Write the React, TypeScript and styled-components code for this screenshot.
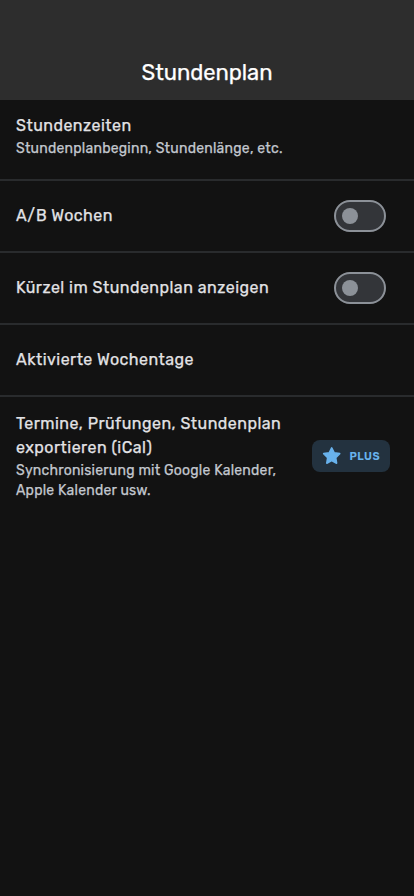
import React from "react";
import styled, { createGlobalStyle } from "styled-components";

const GlobalStyle = createGlobalStyle`
  * { box-sizing: border-box; }
  body {
    margin: 0;
    background: #121212;
    font-family: Rubik, Roboto, sans-serif;
    -webkit-text-stroke: 0.25px currentColor;
  }
`;

const Screen = styled.main`
  display: flex;
  flex-direction: column;
  min-height: 100vh;
  background: #121212;
`;

const Header = styled.header`
  display: flex;
  align-items: flex-end;
  justify-content: center;
  height: 100px;
  padding-bottom: 13px;
  background: #2d2d2d;
`;

const Heading = styled.h1`
  margin: 0;
  color: #fff;
  font-size: 22px;
  font-weight: 400;
  line-height: 28px;
  letter-spacing: -0.05px;
`;

const Row = styled.section<{ $height: number; $last?: boolean }>`
  display: flex;
  align-items: center;
  justify-content: space-between;
  height: ${(p) => p.$height}px;
  padding: 0 28px 0 16px;
  border-bottom: ${(p) => (p.$last ? "0" : "2px solid #292b2d")};
`;

const TopRow = styled(Row)`
  align-items: flex-start;
  padding-top: 14px;
`;

const ExportRow = styled(Row)`
  padding-right: 24px;
`;

const Labels = styled.div`
  display: flex;
  flex-direction: column;
`;

const Label = styled.span`
  color: #e2e2e5;
  font-size: 16px;
  font-weight: 400;
  line-height: 24px;
  letter-spacing: 0.47px;
  white-space: pre-line;
`;

const Description = styled.span`
  margin: 1px 0 -1px;
  color: #c2c7ce;
  font-size: 14px;
  font-weight: 400;
  line-height: 20px;
  letter-spacing: 0.22px;
  white-space: pre-line;
`;

const Switch = styled.button`
  display: flex;
  align-items: center;
  flex: none;
  width: 52px;
  height: 32px;
  padding: 0 6px;
  border: 2px solid #8c9198;
  border-radius: 16px;
  background: #333539;
`;

const Thumb = styled.span`
  width: 16px;
  height: 16px;
  border-radius: 50%;
  background: #8c9198;
`;

const Badge = styled.div`
  display: flex;
  align-items: center;
  flex: none;
  gap: 8px;
  width: 78.5px;
  height: 32px;
  padding-left: 10px;
  border-radius: 8px;
  background: #23323f;
  color: #68b2ec;
`;

const BadgeText = styled.span`
  padding-top: 1px;
  font-size: 11px;
  font-weight: 600;
  line-height: 16px;
  letter-spacing: 0.45px;
  -webkit-text-stroke: 0;
`;

const Star = () => (
  <svg width="20" height="20" viewBox="0 0 20 20" fill="currentColor" stroke="currentColor" strokeWidth="1.6" strokeLinejoin="round">
    <path d="M9.7 1.9L12.2 6.9L17.7 7.6L13.7 11.6L14.6 17.2L9.7 14.5L4.8 17.2L5.7 11.6L1.7 7.6L7.2 6.9Z" />
  </svg>
);

const Toggle = ({ label }: { label: string }) => (
  <Switch role="switch" aria-checked={false} aria-label={label}>
    <Thumb />
  </Switch>
);

export default function App() {
  return (
    <>
      <GlobalStyle />
      <Screen>
        <Header>
          <Heading>Stundenplan</Heading>
        </Header>
        <TopRow $height={81}>
          <Labels>
            <Label>Stundenzeiten</Label>
            <Description>Stundenplanbeginn, Stundenlänge, etc.</Description>
          </Labels>
        </TopRow>
        <Row $height={72}>
          <Label>A/B Wochen</Label>
          <Toggle label="A/B Wochen" />
        </Row>
        <Row $height={72}>
          <Label>Kürzel im Stundenplan anzeigen</Label>
          <Toggle label="Kürzel im Stundenplan anzeigen" />
        </Row>
        <Row $height={72}>
          <Label>Aktivierte Wochentage</Label>
        </Row>
        <ExportRow $height={118} $last>
          <Labels>
            <Label>{"Termine, Prüfungen, Stundenplan\nexportieren (iCal)"}</Label>
            <Description>{"Synchronisierung mit Google Kalender,\nApple Kalender usw."}</Description>
          </Labels>
          <Badge>
            <Star />
            <BadgeText>PLUS</BadgeText>
          </Badge>
        </ExportRow>
      </Screen>
    </>
  );
}
